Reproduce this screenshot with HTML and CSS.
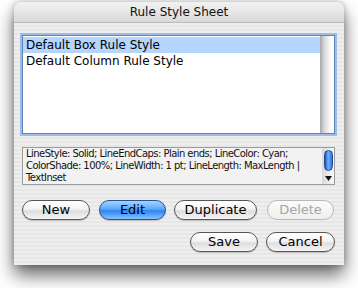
FILE: index.html
```html
<!DOCTYPE html>
<html>
<head>
<meta charset="utf-8">
<link rel="stylesheet" href="styles.css">
</head>
<body>
<div class="window">
  <div class="titlebar">Rule Style Sheet</div>
  <div class="content">
    <div class="list">
      <div class="rows">
        <div class="row selected">Default Box Rule Style</div>
        <div class="row">Default Column Rule Style</div>
      </div>
      <div class="vscroll"></div>
    </div>
    <div class="desc">
      <div class="desc-text">LineStyle: Solid; LineEndCaps: Plain ends; LineColor: Cyan;<br>ColorShade: 100%; LineWidth: 1 pt; LineLength: MaxLength |<br>TextInset</div>
      <div class="desc-scroll">
        <div class="thumb"></div>
        <div class="arrow">
          <svg width="7" height="5" viewBox="0 0 7 5"><path d="M0 0 H7 L3.5 5 Z" fill="#111"/></svg>
        </div>
      </div>
    </div>
    <div class="btnrow">
      <button class="btn w-new">New</button>
      <button class="btn default w-edit">Edit</button>
      <button class="btn w-dup">Duplicate</button>
      <button class="btn disabled w-del">Delete</button>
    </div>
    <div class="btnrow right">
      <button class="btn w-save">Save</button>
      <button class="btn w-cancel">Cancel</button>
    </div>
  </div>
</div>
</body>
</html>
```

FILE: styles.css
```css
html, body {
  margin: 0;
  padding: 0;
  background: #ffffff;
}
body {
  width: 358px;
  height: 288px;
  overflow: hidden;
  font-family: "DejaVu Sans", "Lucida Grande", sans-serif;
}
.window {
  margin: 2px 0 0 14px;
  width: 330px;
  height: 263px;
  border-radius: 7px 7px 0 0;
  box-shadow: 0 10px 18px rgba(0, 0, 0, 0.6), 0 0 6px rgba(0, 0, 0, 0.25);
  display: flex;
  flex-direction: column;
  overflow: hidden;
  background: #ececec;
}
.titlebar {
  height: 21px;
  flex: 0 0 21px;
  box-sizing: border-box;
  background: linear-gradient(#f2f2f2, #d9d9d9);
  border-bottom: 1px solid #bcbcbc;
  border-radius: 7px 7px 0 0;
  text-align: center;
  font-size: 12px;
  line-height: 21px;
  color: #111;
}
.content {
  flex: 1;
  padding: 12px 9px 0 8px;
  background: repeating-linear-gradient(#eeeeee 0, #eeeeee 2px, #e7e7e7 2px, #e7e7e7 4px);
}
.list {
  height: 99px;
  box-sizing: border-box;
  border: 1px solid #5f83b8;
  box-shadow: 0 0 0 2px #9dbde6;
  background: #fff;
  display: flex;
}
.rows {
  flex: 1;
  padding-top: 1px;
}
.row {
  height: 16px;
  line-height: 16px;
  font-size: 12px;
  padding-left: 3px;
  color: #000;
}
.row.selected {
  background: #b4d5fe;
}
.vscroll {
  width: 14px;
  background: linear-gradient(90deg, #a7a7a7, #d8d8d8 30%, #f7f7f7 70%, #ffffff);
}
.desc {
  margin-top: 13px;
  height: 38px;
  box-sizing: border-box;
  border: 1px solid #9a9a9a;
  background: #f2f2f2;
  display: flex;
  width: 313px;
}
.desc-text {
  flex: 1;
  font-size: 10px;
  letter-spacing: -0.55px;
  line-height: 12px;
  white-space: nowrap;
  overflow: hidden;
  padding: 0 2px 0 3px;
  color: #111;
}
.desc-scroll {
  width: 12px;
  display: flex;
  flex-direction: column;
  align-items: center;
  background: linear-gradient(90deg, #d8d8d8, #fafafa);
}
.thumb {
  width: 9px;
  height: 21px;
  margin-top: 2px;
  border-radius: 5px;
  background: linear-gradient(90deg, #1a4fb0, #6fb3ff 45%, #2d74e0);
  border: 1px solid #1d4a98;
  box-sizing: border-box;
}
.arrow {
  margin-top: auto;
  height: 12px;
  display: flex;
  align-items: center;
  justify-content: center;
}
.btnrow {
  display: flex;
  gap: 8px;
  margin-top: 15px;
}
.btnrow.right {
  margin-top: 12px;
  justify-content: flex-end;
}
.btn {
  height: 20px;
  box-sizing: border-box;
  border: 1px solid #555;
  border-radius: 10px;
  background: linear-gradient(#ffffff 0, #f4f4f4 45%, #dedede 55%, #f5f5f5 100%);
  font-family: "DejaVu Sans", sans-serif;
  font-size: 13px;
  color: #000;
  padding: 0;
  line-height: 18px;
  box-shadow: 0 1px 1px rgba(0,0,0,0.2);
}
.btn.default {
  border-color: #2b4f8a;
  color: #000;
  background: linear-gradient(#a7d2ff 0, #5aa8ff 45%, #2e84f0 55%, #87c4ff 100%);
}
.btn.disabled {
  border-color: #b8b8b8;
  color: #a5a5a5;
  background: linear-gradient(#fbfbfb, #efefef);
  box-shadow: none;
}
.w-new { width: 68px; }
.w-edit { width: 67px; margin-left: 1px; }
.w-dup { width: 83px; }
.w-del { width: 67px; margin-left: 2px; }
.w-save { width: 68px; }
.w-cancel { width: 69px; }
```
